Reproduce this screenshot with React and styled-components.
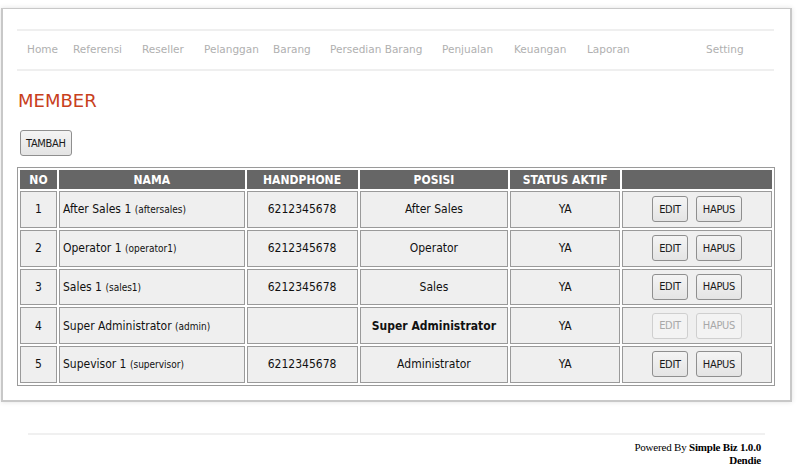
import styled, { createGlobalStyle } from 'styled-components';

const GlobalStyle = createGlobalStyle`
  html, body {
    margin: 0;
    padding: 0;
    background: #ffffff;
  }
`;

// width = distance from the start of one menu item to the next
const menu = [
  { label: 'Home', w: 46 },
  { label: 'Referensi', w: 69 },
  { label: 'Reseller', w: 62 },
  { label: 'Pelanggan', w: 69 },
  { label: 'Barang', w: 57 },
  { label: 'Persedian Barang', w: 112 },
  { label: 'Penjualan', w: 72 },
  { label: 'Keuangan', w: 73 },
  { label: 'Laporan', w: 119 },
  { label: 'Setting', w: 60 },
];

const members = [
  { no: 1, name: 'After Sales 1', user: 'aftersales', phone: '6212345678', posisi: 'After Sales' },
  { no: 2, name: 'Operator 1', user: 'operator1', phone: '6212345678', posisi: 'Operator' },
  { no: 3, name: 'Sales 1', user: 'sales1', phone: '6212345678', posisi: 'Sales' },
  { no: 4, name: 'Super Administrator', user: 'admin', phone: '', posisi: 'Super Administrator', locked: true },
  { no: 5, name: 'Supevisor 1', user: 'supervisor', phone: '6212345678', posisi: 'Administrator' },
];

const App = () => {
  return (
    <>
      <GlobalStyle />
      <Box>
        <Nav>
          {menu.map((item) => (
            <NavItem key={item.label} $w={item.w}>{item.label}</NavItem>
          ))}
        </Nav>

        <Title>MEMBER</Title>

        <Button type="button">TAMBAH</Button>

        <Table>
          <thead>
            <tr>
              <Th $w={35}>NO</Th>
              <Th $w={184}>NAMA</Th>
              <Th $w={109}>HANDPHONE</Th>
              <Th $w={147}>POSISI</Th>
              <Th $w={108}>STATUS AKTIF</Th>
              <Th $w={148}></Th>
            </tr>
          </thead>
          <tbody>
            {members.map((m) => (
              <tr key={m.no}>
                <Td $center>{m.no}</Td>
                <Td>
                  {m.name} <Small>({m.user})</Small>
                </Td>
                <Td $center>{m.phone}</Td>
                <Td $center $bold={m.locked}>{m.posisi}</Td>
                <Td $center>YA</Td>
                <Td $center>
                  <Actions>
                    <Button type="button" disabled={m.locked}>EDIT</Button>
                    <Button type="button" disabled={m.locked}>HAPUS</Button>
                  </Actions>
                </Td>
              </tr>
            ))}
          </tbody>
        </Table>
      </Box>

      <Footer>
        Powered By <b>Simple Biz 1.0.0</b>
        <br />
        <b>Dendie</b>
      </Footer>
    </>
  );
};

const Box = styled.div`
  box-sizing: border-box;
  width: 791px;
  height: 394px;
  margin: 8px 0 0 1px;
  padding: 20px 16px 0 14px;
  border: 1px solid #c8c8c8;
  border-left-width: 2px;
  border-bottom-width: 2px;
  border-right-width: 2px;
  box-shadow: 0 0 5px rgba(0, 0, 0, 0.12);
  background: #ffffff;
`;

const Nav = styled.div`
  display: flex;
  align-items: center;
  height: 35px;
  padding: 0 0 3px 10px;
  border-top: 2px solid #efefef;
  border-bottom: 2px solid #efefef;
  font-family: 'DejaVu Sans', Verdana, sans-serif;
  font-size: 10.5px;
  color: #b0b0b0;
`;

const NavItem = styled.span`
  flex: 0 0 ${(p) => p.$w}px;
  white-space: nowrap;
`;

const Title = styled.h1`
  margin: 19px 0 18px 1px;
  font-family: 'DejaVu Sans', Verdana, sans-serif;
  font-size: 18px;
  font-weight: normal;
  line-height: 22px;
  color: #c8401c;
`;

const Button = styled.button`
  height: 26px;
  padding: 0 5px;
  margin: 0 0 0 3px;
  border: 1px solid ${(p) => (p.disabled ? '#cfcfcf' : '#8f8f8f')};
  border-radius: 3px;
  background: ${(p) => (p.disabled ? '#f3f3f3' : 'linear-gradient(#f4f4f4, #e4e4e4)')};
  color: ${(p) => (p.disabled ? '#a8a8a8' : '#1a1a1a')};
  font-family: 'DejaVu Sans Condensed', 'DejaVu Sans', sans-serif;
  font-size: 11px;
  letter-spacing: -0.3px;
  cursor: pointer;
`;

const Actions = styled.div`
  display: flex;
  justify-content: center;
  gap: 8px;

  & > button {
    margin: 0;
    padding: 0 6px;
  }
`;

const Table = styled.table`
  margin-top: 11px;
  width: 758px;
  border: 1px solid #9a9a9a;
  border-spacing: 2px;
  font-family: 'DejaVu Sans Condensed', 'DejaVu Sans', sans-serif;
  font-size: 12px;
  color: #111;
`;

const Th = styled.th`
  width: ${(p) => p.$w}px;
  height: 17px;
  padding: 0;
  background: #666666;
  border: 1px solid #666666;
  color: #ffffff;
  font-weight: bold;
  text-align: center;
`;

const Td = styled.td`
  height: 34.75px;
  padding: 0 3px;
  background: #efefef;
  border: 1px solid #9a9a9a;
  text-align: ${(p) => (p.$center ? 'center' : 'left')};
  font-weight: ${(p) => (p.$bold ? 'bold' : 'normal')};
`;

const Small = styled.span`
  font-size: 10px;
`;

const Footer = styled.div`
  width: 733px;
  margin: 31px 0 0 28px;
  padding: 6px 4px 0 0;
  border-top: 2px solid #f0f0f0;
  text-align: right;
  font-family: 'Liberation Serif', 'Times New Roman', serif;
  font-size: 11px;
  letter-spacing: -0.2px;
  line-height: 13px;
  color: #000;
`;

export default App;
